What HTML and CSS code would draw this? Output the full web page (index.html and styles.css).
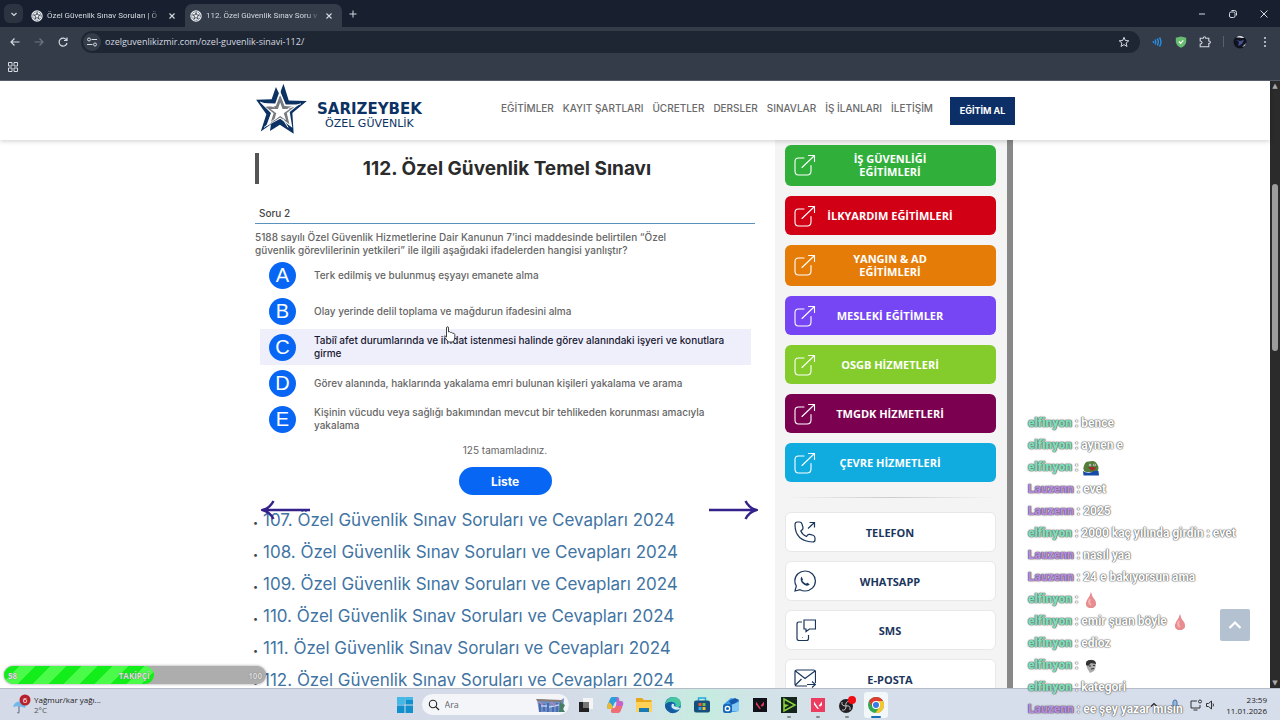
FILE: index.html
```html
<!DOCTYPE html>
<html lang="tr">
<head>
<meta charset="utf-8">
<title>112. Özel Güvenlik Sınav Soruları</title>
<link rel="stylesheet" href="styles.css">
</head>
<body>
<svg class="defs" aria-hidden="true">
  <symbol id="star-badge" viewBox="0 0 12 12"><circle cx="6" cy="6" r="5.7" fill="#eef1f5"/><circle cx="6" cy="6" r="4.3" fill="none" stroke="#333c49" stroke-width=".8" stroke-dasharray="1.2 .6"/><path d="M6 2.6 6.9 5 9.4 5 7.4 6.5 8.1 9 6 7.5 3.9 9 4.6 6.5 2.6 5 5.1 5Z" fill="none" stroke="#27313f" stroke-width=".8"/></symbol>
  <symbol id="close" viewBox="0 0 10 10"><path d="M2.5 2.5 7.5 7.5M7.5 2.5 2.5 7.5" fill="none" stroke="currentColor" stroke-width="1.1"/></symbol>
  <symbol id="open" viewBox="0 0 22 22"><path d="M10 4H4.500Q1 4 1 7.500V17Q1 21 4.500 21H13Q17 21 17 17V11.500M8 13.500 20.500 1.500M14.500 1.500H20.500V7.500" fill="none" stroke="currentColor" stroke-width="1.1" stroke-linecap="round" stroke-linejoin="round"/></symbol>
</svg>
<div class="screen">
  <header class="browser">
    <div class="tabs">
      <button class="tab-search" aria-label="Sekmelerde ara"><svg viewBox="0 0 10 10" width="10" height="10"><path d="M2.5 4 5 6.500 7.500 4" fill="none" stroke="currentColor" stroke-width="1.200"/></svg></button>
      <div class="tab"><svg class="fav"><use href="#star-badge"/></svg><span class="tab-title">Özel Güvenlik Sınav Soruları | Ö</span><button class="x" aria-label="Kapat"><svg><use href="#close"/></svg></button></div>
      <div class="tab active"><svg class="fav"><use href="#star-badge"/></svg><span class="tab-title">112. Özel Güvenlik Sınav Soru v</span><button class="x" aria-label="Kapat"><svg><use href="#close"/></svg></button></div>
      <button class="new-tab" aria-label="Yeni sekme"><svg viewBox="0 0 10 10" width="10" height="10"><path d="M5 1.500V8.500M1.500 5H8.500" stroke="currentColor"/></svg></button>
      <div class="window-buttons">
        <button aria-label="Küçült"><svg viewBox="0 0 10 10"><path d="M2 5H8" stroke="currentColor"/></svg></button>
        <button aria-label="Geri yükle"><svg viewBox="0 0 10 10"><rect x="1.500" y="3" width="5.500" height="5.500" rx="1.500" fill="none" stroke="currentColor"/><path d="M3.500 1.500H6.500Q8.500 1.500 8.500 3.500V6.500" fill="none" stroke="currentColor"/></svg></button>
        <button aria-label="Kapat"><svg viewBox="0 0 10 10"><path d="M1.500 1.500 8.500 8.500M8.500 1.500 1.500 8.500" stroke="currentColor"/></svg></button>
      </div>
    </div>
    <div class="toolbar">
      <button class="tool" aria-label="Geri"><svg viewBox="0 0 12 12"><path d="M10.500 6H2M5.500 2.500 2 6 5.500 9.500" fill="none" stroke="currentColor" stroke-width="1.200"/></svg></button>
      <button class="tool dim" aria-label="İleri"><svg viewBox="0 0 12 12"><path d="M1.500 6H10M6.500 2.500 10 6 6.500 9.500" fill="none" stroke="currentColor" stroke-width="1.200"/></svg></button>
      <button class="tool" aria-label="Yenile"><svg viewBox="0 0 12 12"><path d="M9.500 4A4 4 0 1 0 10 7M10 1.500V4.500H7" fill="none" stroke="currentColor" stroke-width="1.200"/></svg></button>
      <div class="omnibox">
        <span class="site-info"><svg viewBox="0 0 12 12" width="12" height="12"><path d="M5.500 3.500H11M1 8.500H6.500" stroke="currentColor"/><circle cx="3" cy="3.500" r="1.500" fill="none" stroke="currentColor"/><circle cx="9" cy="8.500" r="1.500" fill="none" stroke="currentColor"/></svg></span>
        <input class="url" aria-label="Adres" value="ozelguvenlikizmir.com/ozel-guvenlik-sinavi-112/">
        <svg viewBox="0 0 12 12" width="12" height="12"><path d="M6 1.300 7.300 4.500 10.800 4.800 8.100 7 9 10.500 6 8.600 3 10.500 3.900 7 1.200 4.800 4.700 4.500Z" fill="none" stroke="currentColor"/></svg>
      </div>
      <div class="extensions">
        <svg viewBox="0 0 12 12"><circle cx="2.500" cy="6" r="1" fill="#2a8de0"/><path d="M4 3.500Q5.500 6 4 8.500M6.200 2.500Q8.500 6 6.200 9.500M8.500 1.500Q11.500 6 8.500 10.500" fill="none" stroke="#2a8de0" stroke-width="1.400"/></svg>
        <svg viewBox="0 0 12 12"><path d="M6 .5 11.200 1.800V6Q10.500 10 6 11.700 1.500 10 .8 6V1.800Z" fill="#68bc71"/><path d="M3.900 5.500 5.600 7.300 8.300 4.400" fill="none" stroke="#fff" stroke-width="1.200"/></svg>
        <svg class="outline" viewBox="0 0 12 12"><path d="M1.200 2.300H4.200Q4.500 .8 5.500 .8T6.800 2.300H9.800V5Q11.400 5.200 11.400 6.300T9.800 7.600V10.800H1.200V8Q3 7.800 3 6.500T1.200 5Z" fill="none" stroke="currentColor" stroke-width="1.100"/></svg>
        <i class="sep"></i>
        <svg class="avatar" viewBox="0 0 14 14"><circle cx="7" cy="7" r="6.500" fill="#10131f"/><path d="M3 2.500Q7-1 11.500 3L9 3 6 2.500Z" fill="#d8dde0"/><path d="M3 5 6 7 5 11 9 9 11 5 7 6Z" fill="#44508c"/><path d="M9 12 13 8 12 11Z" fill="#b6bcc0"/></svg>
        <svg class="outline" viewBox="0 0 12 12"><g fill="currentColor"><circle cx="6" cy="2" r="1"/><circle cx="6" cy="6" r="1"/><circle cx="6" cy="10" r="1"/></g></svg>
      </div>
    </div>
    <div class="bookmarks"><button aria-label="Uygulamalar"><svg viewBox="0 0 10 10" width="10" height="10"><path d="M.5.500H4V4H.5ZM6 .5H9.500V4H6ZM.5 6H4V9.500H.5ZM6 6H9.500V9.500H6Z" fill="none" stroke="currentColor"/></svg></button></div>
  </header>

  <div class="viewport">
    <div class="site">
      <div class="site-header">
        <div class="wrap bar">
          <a class="logo" href="#">
            <svg viewBox="45 7 160 158" width="53" height="52"><path d="M131 9 147 60 202 62 158 98 162 161 120 134 90 153 93 132 62 154 79 102 48 58 95 56 108 19 119 42Z" fill="#0b3263"/><path d="M120 30 138 72 178 72 150 95 158 143 121 116 78 139 93 98 62 68 106 69Z" fill="#fff"/><path d="M121 43 134 77 165 79 141 98 149 132 121 112 91 131 101 99 76 79 108 77Z" fill="#777b80"/><path d="M121 66 128 86 150 86 132 99 139 120 121 107 103 120 109 99 92 86 114 86Z" fill="#fff"/><path d="M118 28 124 48M184 70 144 85M145 142 129 116M72 142 110 113M60 65 104 80" stroke="#fff" stroke-width="3"/></svg>
            <span class="logo-text"><b>SARIZEYBEK</b><span>ÖZEL GÜVENLİK</span></span>
          </a>
          <nav class="menu">
            <a href="#">EĞİTİMLER</a><a href="#">KAYIT ŞARTLARI</a><a href="#">ÜCRETLER</a><a href="#">DERSLER</a><a href="#">SINAVLAR</a><a href="#">İŞ İLANLARI</a><a href="#">İLETİŞİM</a>
          </nav>
          <a class="cta" href="#">EĞİTİM AL</a>
        </div>
      </div>
      <div class="wrap columns">
        <main class="quiz">
          <h1>112. Özel Güvenlik Temel Sınavı</h1>
          <h2>Soru 2</h2>
          <p class="question">5188 sayılı Özel Güvenlik Hizmetlerine Dair Kanunun 7’inci maddesinde belirtilen “Özel<br>güvenlik görevlilerinin yetkileri” ile ilgili aşağıdaki ifadelerden hangisi yanlıştır?</p>
          <div class="options">
            <button class="option"><b>A</b><span>Terk edilmiş ve bulunmuş eşyayı emanete alma</span></button>
            <button class="option"><b>B</b><span>Olay yerinde delil toplama ve mağdurun ifadesini alma</span></button>
            <button class="option hover"><b>C</b><span>Tabiî afet durumlarında ve imdat istenmesi halinde görev alanındaki işyeri ve konutlara<br>girme</span></button>
            <button class="option"><b>D</b><span>Görev alanında, haklarında yakalama emri bulunan kişileri yakalama ve arama</span></button>
            <button class="option"><b>E</b><span>Kişinin vücudu veya sağlığı bakımından mevcut bir tehlikeden korunması amacıyla<br>yakalama</span></button>
          </div>
          <p class="progress">125 tamamladınız.</p>
          <button class="list-button">Liste</button>
          <div class="related">
            <ul>
              <li><a href="#">107. Özel Güvenlik Sınav Soruları ve Cevapları 2024</a></li>
              <li><a href="#">108. Özel Güvenlik Sınav Soruları ve Cevapları 2024</a></li>
              <li><a href="#">109. Özel Güvenlik Sınav Soruları ve Cevapları 2024</a></li>
              <li><a href="#">110. Özel Güvenlik Sınav Soruları ve Cevapları 2024</a></li>
              <li><a href="#">111. Özel Güvenlik Sınav Soruları ve Cevapları 2024</a></li>
              <li><a href="#">112. Özel Güvenlik Sınav Soruları ve Cevapları 2024</a></li>
            </ul>
            <button class="arrow prev" aria-label="Önceki"><svg viewBox="0 0 50 20" width="50" height="20"><path d="M49 10H4M12.500 1Q9 8 1.500 10 9 12 12.500 19" fill="none" stroke="#35218a" stroke-width="2.400"/></svg></button>
            <button class="arrow next" aria-label="Sonraki"><svg viewBox="0 0 50 20" width="50" height="20"><path d="M1 10H46M37.500 1Q41 8 48.500 10 41 12 37.500 19" fill="none" stroke="#35218a" stroke-width="2.400"/></svg></button>
          </div>
        </main>
        <aside class="side">
          <a class="service green" href="#"><svg><use href="#open"/></svg><span>İŞ GÜVENLİĞİ<br>EĞİTİMLERİ</span></a>
          <a class="service red" href="#"><svg><use href="#open"/></svg><span>İLKYARDIM EĞİTİMLERİ</span></a>
          <a class="service orange" href="#"><svg><use href="#open"/></svg><span>YANGIN &amp; AD<br>EĞİTİMLERİ</span></a>
          <a class="service violet" href="#"><svg><use href="#open"/></svg><span>MESLEKİ EĞİTİMLER</span></a>
          <a class="service lime" href="#"><svg><use href="#open"/></svg><span>OSGB HİZMETLERİ</span></a>
          <a class="service plum" href="#"><svg><use href="#open"/></svg><span>TMGDK HİZMETLERİ</span></a>
          <a class="service sky" href="#"><svg><use href="#open"/></svg><span>ÇEVRE HİZMETLERİ</span></a>
          <hr>
          <a class="service contact" href="#"><svg viewBox="0 0 22 22"><path d="M1 3.500Q1 1 3.500 1H5.500Q7.500 1 8 3L9 6.500Q9.300 8 8 9L6.800 10Q8.500 14 12.500 15.500L13.500 14.200Q14.300 13 16 13.400L19 14.300Q21 15 21 17V19Q21 21 18.500 21Q1 20 1 3.500M14 7.500 20.500 1.500M15.500 1.500H20.500V6.500"/></svg><span>TELEFON</span></a>
          <a class="service contact" href="#"><svg viewBox="0 0 22 22"><path d="M1 21 2.300 16Q.8 13.500.8 10.800A10.300 10 0 1 1 11 21Q8.500 21 6 19.700Z"/><path d="M7.500 6.500 9 9.500 8.300 10.800Q10 13 12 13.800L13.200 12.800 15.800 14.200Q14.500 16.200 12 15.500 8 14 6.800 10.500 6.300 8 7.500 6.500Z" fill="currentColor" stroke="none"/></svg><span>WHATSAPP</span></a>
          <a class="service contact" href="#"><svg viewBox="0 0 22 22"><path d="M8 3H5Q3 3 3 5V19.500Q3 21.500 5 21.500H12.500Q14.500 21.500 14.500 19.500V16M10 1H21.500V10H15.500L12 12.500V10H10ZM8.500 18.500H9"/></svg><span>SMS</span></a>
          <a class="service contact" href="#"><svg viewBox="0 0 22 22"><path d="M13 18H3Q1 18 1 16V4Q1 2 3 2H19.500Q21.500 2 21.500 4V15M1.500 3 11 10.500 21 3M1.500 17 7.500 11M13 16.500H21.500M18 13.500 21.500 16.500 18 19.500"/></svg><span>E-POSTA</span></a>
        </aside>
      </div>
    </div>
    <div class="scrollbar"><span>▲</span><i></i><span>▼</span></div>
    <button class="to-top" aria-label="Yukarı"><svg viewBox="0 0 14 14" width="14" height="14"><path d="M1.500 10 7 4.500 12.500 10" fill="none" stroke="#fff" stroke-width="2.200"/></svg></button>
  </div>

  <footer class="taskbar">
    <div class="weather">
      <svg viewBox="0 0 20 22" width="20" height="22"><path d="M1 13Q3 6 11 8 15 10 13 14L7 12Z" fill="#70b9ea"/><path d="M7 12V18Q7 20 5.300 18.500" fill="none" stroke="#586779"/><circle cx="13" cy="6" r="5.500" fill="#b8202c"/><text x="13" y="9" text-anchor="middle" class="badge">6</text></svg>
      <div><span>Yağmur/kar yağı...</span><span class="temp">2°C</span></div>
    </div>
    <div class="apps">
      <button aria-label="Başlat"><svg viewBox="0 0 18 18"><path d="M1 1H8.500V8.500H1ZM9.500 1H17V8.500H9.500ZM1 9.500H8.500V17H1ZM9.500 9.500H17V17H9.500Z" fill="#1190cd"/><path d="M1 1H8.500V8.500H1ZM9.500 1H17V4H9.500Z" fill="#43b9e6"/></svg></button>
      <label class="search"><svg viewBox="0 0 12 12" width="12" height="12"><circle cx="5" cy="5" r="3.700" fill="none" stroke="#222" stroke-width="1.100"/><path d="M7.700 7.700 11 11" stroke="#222" stroke-width="1.200"/></svg><input aria-label="Ara" placeholder="Ara"><svg viewBox="0 0 30 16" width="30" height="16"><path d="M1 2 24 4 28 1 27 15H3Z" fill="#6c8fc1"/><path d="M0 2 26 3V5L1 4Z" fill="#8b7a73"/><path d="M4 15V6M8 14V7M12 15V6M17 15V7M21 15V6" stroke="#425fae" stroke-width="1.500"/><path d="M5 9H11M13 10 23 8" stroke="#b9d3f2" stroke-width="1.500"/><path d="M24 5 29 8 27 12 29 15H23Z" fill="#477e66"/><path d="M3 5 7 8M15 5 19 9" stroke="#bf80bd" stroke-width="1.500"/></svg></label>
      <button aria-label="Görev görünümü"><svg viewBox="0 0 18 18"><path d="M6 2H16V13H6Z" fill="#f5f5f5"/><path d="M2 6H12V16H2Z" fill="#222"/><path d="M6 6H12V12H6Z" fill="#777"/></svg></button>
      <button aria-label="Copilot"><svg viewBox="0 0 18 18"><path d="M6 1H11Q13 1 13 4L11 6Q9 5 8 8L6 13H3Q0 13 1.500 9L4 3Q5 1 6 1Z" fill="#2c9edb"/><path d="M11 1Q13 1 13.500 5H15Q18 5 17 9L14.500 15Q14 17 11 17H7Q5 17 5 14L7 12Q9 13 10 10Z" fill="#c563c9"/><path d="M1.500 9 3 6Q6 8 7 11L6 13H3Q0 13 1.500 9Z" fill="#eaba35"/><path d="M5 14 7 12Q9 13 10 10H16L14.500 15Q14 17 11 17H7Q5 17 5 14Z" fill="#f06d72"/></svg></button>
      <button aria-label="Dosya Gezgini"><svg viewBox="0 0 18 18"><path d="M1 2H7L9 4H16.500V16H1Z" fill="#e8a81d"/><path d="M1 6H17V16H1Z" fill="#ffd257"/><path d="M4 12H14V16H4Z" fill="#187bb6"/></svg></button>
      <button aria-label="Edge"><svg viewBox="0 0 18 18"><circle cx="9" cy="9" r="8" fill="#1673bd"/><path d="M1 9Q3 1 10 1 17 2 17 8 16 12 11 11 13 7 9 6 4 5 1 9Z" fill="#46c79f"/><path d="M1 9Q4 5 8.500 6.500 5 9 7 12 10 16 15 14 9 20 4 15 1 13 1 9Z" fill="#155b9f"/><path d="M8 8Q6 12 11 13.500 14 14 16 13 16 11 12 11 9 10 10 8Z" fill="#d9edf2"/></svg></button>
      <button aria-label="Mağaza"><svg viewBox="0 0 18 18"><path d="M5.500 5V2H12.500V5" fill="none" stroke="#25a8df" stroke-width="1.500"/><rect x="1" y="4.500" width="16" height="12" rx="2" fill="#174f7c"/><path d="M5.500 7H8.500V10H5.500Z" fill="#ed5837"/><path d="M9.500 7H12.500V10H9.500Z" fill="#7dbd42"/><path d="M5.500 11H8.500V14H5.500Z" fill="#33a8df"/><path d="M9.500 11H12.500V14H9.500Z" fill="#f5bd35"/></svg></button>
      <button aria-label="Outlook"><svg viewBox="0 0 18 18"><path d="M2 8 9 2 17 4V15Q10 17 3 15Z" fill="#3899e6"/><path d="M7 5 13 2 17 4 10 10Z" fill="#1758aa"/><path d="M6 10 17 6V15H6Z" fill="#83c7f4"/><rect x="1" y="8" width="9" height="9" rx="2" fill="#1968ba"/><circle cx="5.500" cy="12.500" r="2.200" fill="none" stroke="#fff" stroke-width="1.300"/></svg></button>
      <button aria-label="Valorant"><svg viewBox="0 0 18 18"><path d="M2 2H16V16H2Z" fill="#101119"/><path d="M5 5.500V8.500L8.500 13H10Z" fill="#e33d5e"/><path d="M13 5.500V9L11.500 10.500 9.500 10Z" fill="#e33d5e"/></svg></button>
      <button class="running" aria-label="Oynatıcı"><svg viewBox="0 0 18 18"><path d="M1 1H17V17H1Z" fill="#14251d"/><path d="M4 3 15 9 4 15Z" fill="none" stroke="#8bd13e" stroke-width="1.500"/><path d="M4 8 9 9 4 12Z" fill="#8bd13e"/></svg></button>
      <button class="running" aria-label="Valorant istemcisi"><svg viewBox="0 0 18 18"><path d="M2 2H16V16H2Z" fill="#ec3d60"/><path d="M5 5.500V8.500L8.500 13H10ZM13 5.500V9L11.500 10.500 9.500 10Z" fill="#fff"/></svg></button>
      <button class="running" aria-label="OBS"><svg viewBox="0 0 18 18"><circle cx="8" cy="10" r="7" fill="#211f22"/><path d="M8 10Q3 10 4 6M8 10Q13 9 12 14M8 10Q8 15 4 14M8 10Q7 6 11 5" fill="none" stroke="#c5c5c5"/><circle cx="14" cy="4" r="4" fill="#f20d12"/></svg></button>
      <button class="running current" aria-label="Chrome"><svg viewBox="0 0 18 18"><circle cx="9" cy="9" r="8" fill="#2fa952"/><path d="M2 5Q5 1 9 1 14 1 16 5H9L5.500 11Z" fill="#df3c31"/><path d="M9 5H16Q19 11 14 15.500 11 17.500 8.500 17L12.500 10.500Z" fill="#f6c72d"/><circle cx="9" cy="9" r="4" fill="#fff"/><circle cx="9" cy="9" r="3" fill="#3979e4"/></svg></button>
    </div>
    <div class="tray">
      <svg viewBox="0 0 12 12"><path d="M3 7.500 6 4.500 9 7.500" fill="none" stroke="#222" stroke-width="1.200"/></svg>
      <svg viewBox="0 0 12 12"><rect x="4" y="1" width="4" height="7" rx="2" fill="#92b9e7" stroke="#4b6f9a"/><path d="M2.500 6Q3 9.500 6 9.500T9.500 6M6 9.500V12" fill="none" stroke="#4b6f9a"/></svg>
      <span class="devices"><svg viewBox="0 0 12 12"><path d="M7 2H1V9H10V6M3.500 11H7.500" fill="none" stroke="#333"/><circle cx="10" cy="2.500" r="1.500" fill="none" stroke="#333"/></svg><svg viewBox="0 0 12 12"><path d="M1.500 4.500H3.500L6.500 2V10L3.500 7.500H1.500ZM8 4.500Q9 6 8 7.500" fill="none" stroke="#333"/></svg></span>
      <div class="clock"><time>23:59</time><time>11.01.2026</time></div>
    </div>
  </footer>

  <div class="goal"><div class="goal-fill"><span>58</span><span>TAKİPÇİ</span></div><span>100</span></div>
  <div class="chat">
    <p><b>elfinyon</b> : bence</p>
    <p><b>elfinyon</b> : aynen e</p>
    <p><b>elfinyon</b> : <svg viewBox="0 0 16 16"><path d="M1 6Q2 1 6 1.500 12-.500 14 4 17 8 14 12H3Q-1 10 1 6Z" fill="#527d3b"/><path d="M0 11Q4 14 9 12 13 10 15.500 11L16 15.500H.5Z" fill="#174ba8"/><path d="M5 7H13Q12 11 8 10.500Z" fill="#9d2d29"/><circle cx="7" cy="5" r="1.200" fill="#eee"/><circle cx="11.500" cy="5" r="1.200" fill="#eee"/><path d="M6.500 5H7.500M11 5H12" stroke="#222"/></svg></p>
    <p><b class="purple">Lauzenn</b> : evet</p>
    <p><b class="purple">Lauzenn</b> : 2025</p>
    <p><b>elfinyon</b> : 2000 kaç yılında girdin : evet</p>
    <p><b class="purple">Lauzenn</b> : nasıl yaa</p>
    <p><b class="purple">Lauzenn</b> : 24 e bakıyorsun ama</p>
    <p><b>elfinyon</b> : <svg viewBox="0 0 16 16"><path d="M8 0Q9 5 12 8 15 13 10 16H6Q1 14 4 8 7 4 8 0Z" fill="#e78c8f"/><path d="M7 7Q5 11 8 13" fill="none" stroke="#f7b4b2" stroke-width="2"/></svg></p>
    <p><b>elfinyon</b> : emir şuan böyle <svg viewBox="0 0 16 16"><path d="M8 0Q9 5 12 8 15 13 10 16H6Q1 14 4 8 7 4 8 0Z" fill="#e78c8f"/><path d="M7 7Q5 11 8 13" fill="none" stroke="#f7b4b2" stroke-width="2"/></svg></p>
    <p><b>elfinyon</b> : edioz</p>
    <p><b>elfinyon</b> : <svg viewBox="0 0 16 16"><path d="M3 4Q7 0 12 3 14 8 11 13L7 15 4 10Z" fill="#aaa"/><path d="M3 7Q2 2 8 2 13 2 13 6L8 5 5 8Z" fill="#333"/><path d="M6 8H8M10 7.500H12M8 11 11 10.500" stroke="#333"/></svg></p>
    <p><b>elfinyon</b> : kategori</p>
    <p><b class="purple">Lauzenn</b> : ee şey yazar mısın</p>
  </div>
  <svg class="cursor" viewBox="0 0 13 17" width="13" height="17"><path d="M3.500 10V2Q3.500.700 4.500.700T5.500 2V6Q7 5 7.500 6.500 9 5.800 9.500 7.300 11.500 6.800 11.800 8.500V12Q11.500 14.500 10 16H5.500L1 10.500Q1.500 9 3.500 11Z" fill="#fff" stroke="#444"/></svg>
</div>
</body>
</html>
```

FILE: styles.css
```css
* { box-sizing: border-box; }
body { margin: 0; font-family: Inter, "Noto Sans", sans-serif; background: #fff; }
button { font: inherit; color: inherit; border: 0; padding: 0; background: none; }
a { text-decoration: none; color: inherit; }
h1, h2, p, ul { margin: 0; }
input { font: inherit; color: inherit; border: 0; padding: 0; background: none; min-width: 0; outline: 0; }
svg { display: block; flex: none; }
.defs { position: absolute; width: 0; height: 0; }
.screen { position: relative; height: 100vh; display: flex; flex-direction: column; overflow: hidden; }

.browser { flex: none; background: #343c4a; color: #d5d9e0; font-family: "Open Sans", sans-serif; border-bottom: 1px solid #565c69; }
.tabs { height: 27px; background: #18202f; display: flex; align-items: center; }
.tab-search { width: 19px; height: 19px; margin: 0 5px 0 4px; border-radius: 6px; background: #2c3442; display: grid; place-items: center; }
.tab { width: 157px; height: 23px; margin-top: 4px; padding: 0 8px 0 3px; display: flex; align-items: center; gap: 4px; font-family: Roboto, sans-serif; font-size: 8px; border-radius: 7px 7px 0 0; }
.tab.active { background: #343c4a; padding-left: 5px; }
.fav { width: 12px; height: 12px; }
.tab-title { flex: 1; overflow: hidden; white-space: nowrap; mask-image: linear-gradient(90deg, #000 88%, transparent); }
.x svg { width: 10px; height: 10px; }
.new-tab { margin-left: 6px; }
.window-buttons { margin-left: auto; display: flex; gap: 21px; padding-right: 11px; }
.window-buttons svg { width: 10px; height: 10px; }
.toolbar { height: 29px; display: flex; align-items: center; padding: 0 9px; }
.tool { width: 24px; }
.tool svg { width: 12px; height: 12px; }
.dim { color: #6d7582; }
.omnibox { flex: 1; height: 22px; border-radius: 11px; background: #1e2633; display: flex; align-items: center; padding: 0 10px 0 2px; gap: 4px; }
.site-info { width: 18px; height: 18px; border-radius: 9px; background: #343c4a; display: grid; place-items: center; }
.url { flex: 1; font-size: 9px; }
.extensions { display: flex; align-items: center; gap: 12px; padding-left: 11px; }
.extensions svg { width: 12px; height: 12px; }
.extensions .avatar { width: 14px; height: 14px; }
.sep { width: 1px; height: 11px; margin-right: -3px; background: #59606d; }
.bookmarks { height: 24px; padding: 6px 8px; display: flex; align-items: flex-start; }

.viewport { position: relative; flex: 1; min-height: 0; display: flex; overflow: hidden; }
.site { flex: 1; min-width: 0; }
.wrap { max-width: 760px; margin: 0 auto; }
.site-header { position: relative; z-index: 1; background: #fff; box-shadow: 0 1px 5px #0003; }
.bar { height: 59px; display: flex; align-items: center; }
.logo { display: flex; align-items: center; gap: 9px; padding-bottom: 3px; color: #0b3263; font-family: "DejaVu Sans", sans-serif; }
.logo-text { display: flex; flex-direction: column; align-items: center; padding-top: 12px; }
.logo-text b { font-size: 15px; line-height: 16px; }
.logo-text span { font-size: 11px; line-height: 13px; }
.menu { margin-left: auto; padding-bottom: 6px; display: flex; gap: 9px; color: #6a6a6a; font-size: 10px; font-weight: 500; white-space: nowrap; }
.cta { margin-left: 17px; width: 65px; line-height: 28px; background: #0b2f66; color: #fff; font-size: 9px; font-weight: 700; text-align: center; }
.columns { display: flex; justify-content: space-between; padding-right: 2px; }
.quiz { width: 500px; padding-top: 13px; color: #666; }
h1 { border-left: 4px solid #555; color: #2b2b2b; font-size: 19px; line-height: 31px; font-weight: 700; text-align: center; }
h2 { margin-top: 20px; padding-left: 4px; font-size: 10px; line-height: 19px; font-weight: 500; color: #444; border-bottom: 1px solid #5a92bb; }
.question { padding-top: 7px; font-size: 10px; line-height: 13px; font-weight: 500; white-space: nowrap; }
.options { padding: 0 4px 0 5px; }
.option { width: 100%; height: 36px; padding-left: 9px; display: flex; align-items: center; gap: 18px; text-align: left; font-size: 10px; line-height: 13px; font-weight: 500; white-space: nowrap; }
.option b { flex: none; width: 27px; height: 27px; border-radius: 14px; background: #0866f5; color: #fff; font: 20px/27px "Liberation Sans", sans-serif; text-align: center; }
.option.hover { background: #efeffc; color: #181830; }
.progress { padding-top: 7px; font-size: 10px; line-height: 13px; text-align: center; }
.list-button { display: block; width: 93px; height: 28px; margin: 10px auto 0; border-radius: 14px; background: #0866f5; color: #fff; font-size: 12px; font-weight: 700; }
.related { position: relative; padding-top: 12px; }
.related ul { padding-left: 8px; color: #444; font-size: 9px; line-height: 32px; }
.related li { height: 32px; }
.related li::marker { content: "•  "; }
.related a { color: #3f74a3; font-size: 17px; line-height: 24px; white-space: nowrap; }
.arrow { position: absolute; top: 5px; }
.prev { left: 6px; }
.next { right: -3px; }

.side { width: 238px; padding: 5px 11px 0 10px; background: #f4f4f4; border-right: 6px solid #888; display: flex; flex-direction: column; gap: 10px; }
.service { height: 39px; padding: 0 34px 0 9px; border-radius: 6px; display: flex; align-items: center; color: #fff; font: 700 11px/13px "Open Sans", sans-serif; text-align: center; }
.service:has(br) { height: 41px; padding-bottom: 1px; }
.service svg { width: 22px; height: 22px; margin-right: 2px; }
.service span { flex: 1; white-space: nowrap; }
.green { background: #30b03a; }
.red { background: #d20015; }
.orange { background: #e57c08; }
.violet { background: #7646f4; }
.lime { background: #84cc2c; }
.plum { background: #7b0050; }
.sky { background: #10abdf; }
.side hr { width: 100%; height: 1px; margin: 5px 0 4px; border: 0; background: linear-gradient(90deg, transparent, #ccc, transparent); }
.contact { height: 40px; margin-bottom: -1px; background: #fff; border: 1px solid #e8e8e8; color: #1b365d; padding-left: 8px; padding-right: 33px; }
.contact svg { fill: none; stroke: currentColor; stroke-width: 1.2; }

.scrollbar { width: 10px; background: #2b2b2b; color: #aaa; display: flex; flex-direction: column; align-items: center; font: 7px/10px "DejaVu Sans", sans-serif; }
.scrollbar i { width: 6px; height: 27.500%; margin-top: 93px; margin-bottom: auto; border-radius: 3px; background: #9d9d9d; }
.to-top { position: absolute; right: 30px; bottom: 47px; width: 30px; height: 32px; border-radius: 2px; background: #b4c1d1; display: grid; place-items: center; }

.taskbar { position: relative; flex: none; height: 32px; display: grid; grid-template-columns: 1fr auto 1fr; align-items: center; background: linear-gradient(90deg, #d4dae7 0 43%, #d2e2e8 50%, #c5ecdf 55%, #d3e2e8 60%, #d6deeb 70%); border-top: 1px solid #b5bcc8; font-family: "Open Sans", sans-serif; font-size: 8px; color: #222; }
.weather { display: flex; align-items: center; padding-left: 12px; gap: 2px; line-height: 10px; }
.weather span { display: block; }
.temp { color: #555; }
.badge { font-size: 8px; fill: #fff; }
.apps { display: flex; align-items: center; gap: 5px; }
.apps button { position: relative; width: 24px; height: 26px; display: grid; place-items: center; border-radius: 3px; }
.apps button svg { width: 18px; height: 18px; }
.search { width: 147px; height: 21px; border-radius: 11px; background: #f3f5f9; display: flex; align-items: center; gap: 5px; padding: 0 3px 0 6px; }
.search input { flex: 1; font-size: 9px; }
.search input::placeholder { color: #666; opacity: 1; }
.running::after { content: ""; position: absolute; bottom: 0; left: 10px; width: 4px; height: 2px; border-radius: 1px; background: #888; }
.apps .current { background: #f2f8f9; }
.current::after { left: 7px; width: 10px; background: #1670b8; }
.tray { justify-self: end; display: flex; align-items: center; gap: 9px; padding-right: 13px; }
.tray svg { width: 12px; height: 12px; }
.devices { display: flex; gap: 3px; }
.clock { display: flex; flex-direction: column; align-items: flex-end; line-height: 11px; }

.goal { position: absolute; left: 4px; bottom: 36px; width: 262px; height: 18px; border-radius: 9px; background: #adadad; box-shadow: 0 0 3px #0006; display: flex; align-items: center; justify-content: space-between; padding-right: 4px; color: #ddd; font: 700 8px "Open Sans", sans-serif; text-shadow: 0 0 1px #666; }
.goal-fill { width: 58%; height: 100%; padding: 0 4px; border-radius: 9px; background: repeating-linear-gradient(135deg, #13ee1a 0 11px, #4bfb49 11px 22px); display: flex; align-items: center; justify-content: space-between; }
.chat { position: absolute; left: 1028px; bottom: 0; color: #fff; font: 700 12px/22px Roboto, sans-serif; text-shadow: 0 0 1px #555, 0 0 1px #555, 0 0 2px #777; white-space: nowrap; }
.chat p { height: 22px; }
.chat b { color: #7fe0bd; }
.chat .purple { color: #b98be0; }
.chat svg { display: inline-block; width: 16px; height: 16px; margin-left: 2px; vertical-align: middle; }
.cursor { position: absolute; left: 443px; top: 326px; }
```
